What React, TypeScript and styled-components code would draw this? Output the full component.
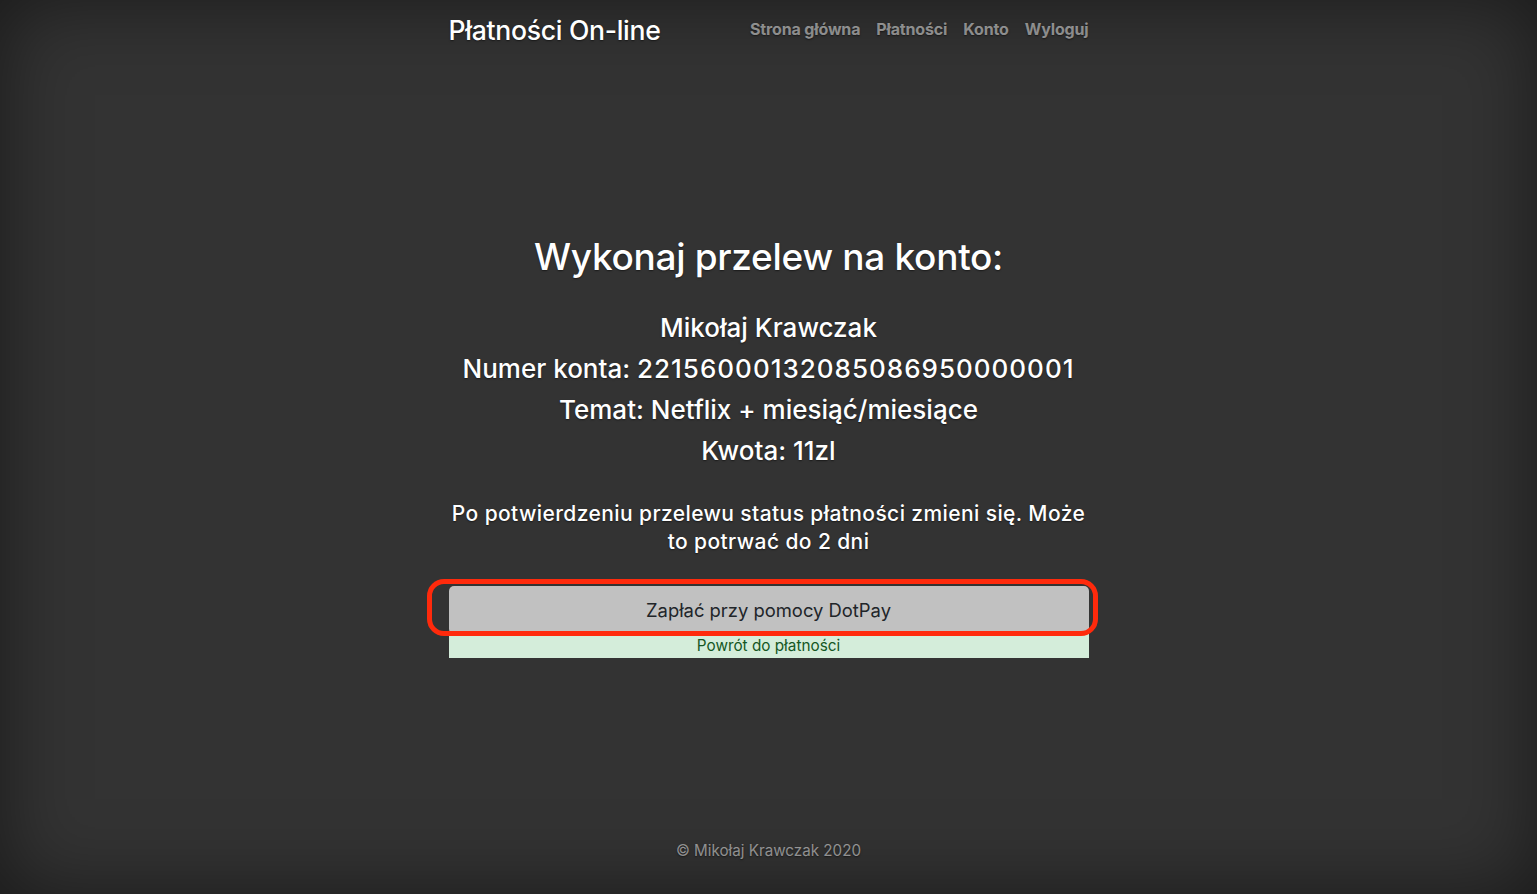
import React from "react";
import styled, { createGlobalStyle } from "styled-components";

const Global = createGlobalStyle`
  html, body { height: 100%; }
  body {
    margin: 0;
    background: #333;
    color: #fff;
    font-family: Inter, "Noto Sans", Roboto, sans-serif;
    box-shadow: inset 0 0 5rem rgba(0, 0, 0, 0.5);
    text-shadow: 0 0.05rem 0.1rem rgba(0, 0, 0, 0.5);
  }
  #root { height: 100%; }
  * { box-sizing: border-box; }
`;

const Cover = styled.div`
  display: flex;
  flex-direction: column;
  width: 100%;
  max-width: 672px;
  height: 100%;
  margin: 0 auto;
  padding: 0 16px;
`;

const Masthead = styled.header`
  display: flex;
  align-items: center;
  justify-content: space-between;
  height: 60px;
`;

const Brand = styled.h3`
  margin: 0;
  font-size: 26.6px;
  font-weight: 500;
  letter-spacing: -0.3px;
`;

const Nav = styled.nav`
  display: flex;
  gap: 16px;
  padding-bottom: 2px;
`;

const NavLink = styled.a`
  color: rgba(255, 255, 255, 0.5);
  font-size: 16px;
  font-weight: 700;
  text-decoration: none;
  letter-spacing: -0.15px;
`;

const Main = styled.main`
  flex: 1;
  display: flex;
  flex-direction: column;
  justify-content: center;
  text-align: center;
  padding-bottom: 8px;
`;

const Heading = styled.h1`
  margin: 0 0 30px;
  font-size: 37px;
  line-height: 48px;
  font-weight: 500;
  letter-spacing: -0.3px;
`;

const InfoLine = styled.h3`
  margin: 0 0 7px;
  font-size: 26px;
  line-height: 34px;
  font-weight: 500;
  letter-spacing: 0;
`;

const Digits = styled.span`
  letter-spacing: 1px;
`;

const Lead = styled.p`
  margin: 25px 0 30px;
  font-size: 21px;
  line-height: 28px;
  font-weight: 500;
  letter-spacing: 0.4px;
`;

const ButtonWrap = styled.div`
  position: relative;
  display: flex;
  flex-direction: column;
`;

const PayButton = styled.button`
  height: 48px;
  border: none;
  border-radius: 5px;
  background: #c1c1c1;
  color: #212529;
  font-family: inherit;
  font-size: 18.4px;
  text-shadow: none;
  cursor: pointer;
`;

const Annotation = styled.div`
  position: absolute;
  left: -22px;
  top: -7px;
  right: -9px;
  height: 57px;
  border: 5px solid #ff2a0c;
  border-radius: 17px;
  pointer-events: none;
`;

const BackBar = styled.a`
  display: block;
  background: #d4edda;
  color: #155724;
  font-size: 15.3px;
  line-height: 24px;
  text-decoration: none;
  text-shadow: none;
`;

const Footer = styled.footer`
  height: 56px;
  text-align: center;
  color: rgba(255, 255, 255, 0.5);
  font-size: 15.2px;
  line-height: 24px;
  padding-top: 1px;
`;

export default function App() {
  return (
    <>
      <Global />
      <Cover>
        <Masthead>
          <Brand>Płatności On-line</Brand>
          <Nav>
            <NavLink href="#">Strona główna</NavLink>
            <NavLink href="#">Płatności</NavLink>
            <NavLink href="#">Konto</NavLink>
            <NavLink href="#">Wyloguj</NavLink>
          </Nav>
        </Masthead>
        <Main>
          <Heading>Wykonaj przelew na konto:</Heading>
          <InfoLine>Mikołaj Krawczak</InfoLine>
          <InfoLine>
            Numer konta: <Digits>22156000132085086950000001</Digits>
          </InfoLine>
          <InfoLine>Temat: Netflix + miesiąć/miesiące</InfoLine>
          <InfoLine>Kwota: 11zl</InfoLine>
          <Lead>
            Po potwierdzeniu przelewu status płatności zmieni się. Może to
            potrwać do 2 dni
          </Lead>
          <ButtonWrap>
            <PayButton>Zapłać przy pomocy DotPay</PayButton>
            <BackBar href="#">Powrót do płatności</BackBar>
            <Annotation />
          </ButtonWrap>
        </Main>
        <Footer>© Mikołaj Krawczak 2020</Footer>
      </Cover>
    </>
  );
}
